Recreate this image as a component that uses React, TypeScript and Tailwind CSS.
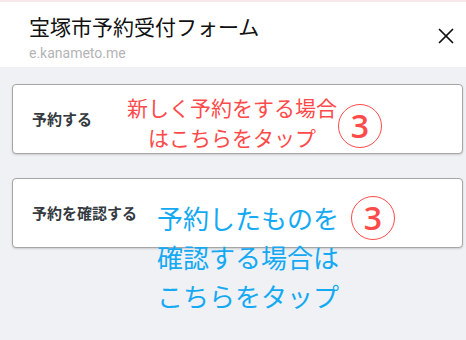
import { X } from 'lucide-react'

const jp = { fontFamily: '"Noto Sans CJK JP", "Noto Sans", sans-serif' }

type CircleProps = { className: string }

// circled step number laid over the button
const StepBadge = ({ className }: CircleProps) => (
  <span
    className={`absolute w-[44px] h-[44px] rounded-full border-[1.5px] border-[#ff4a4a] text-[#ff4a4a] flex items-center justify-center text-[32px] font-semibold leading-none ${className}`}
    style={{ fontFamily: '"Open Sans", "Liberation Sans", sans-serif' }}>
    3
  </span>
)

export default function App() {
  return (
    <div
      className="w-[466px] h-[340px] bg-[#f0f1f5] overflow-hidden"
      style={jp}>
      <div className="h-[2px] bg-[#f8e8ec]" />
      <header className="bg-white h-[65px] flex justify-between pl-[29px] pr-[6px] pt-[10px]">
        <div>
          <h1 className="text-[21px] leading-[28px] text-[#111111]">
            宝塚市予約受付フォーム
          </h1>
          <p
            className="text-[14px] leading-[18px] text-[#b4b4b4] mt-[4px]"
            style={{ fontFamily: 'Roboto, "Liberation Sans", sans-serif' }}>
            e.kanameto.me
          </p>
        </div>
        <button className="w-[28px] h-[28px] mt-[10px] flex items-center justify-center text-[#111111]">
          <X size={26} strokeWidth={1.6} />
        </button>
      </header>

      <main className="pl-[12px] pr-[3px] pt-[17px] flex flex-col gap-[24px]">
        <div className="relative h-[70px] bg-white border border-[#a6a6a6] rounded-[4px] shadow-[0_1px_2px_rgba(0,0,0,0.15)] flex items-center pl-[19px]">
          <span className="text-[15px] font-bold text-[#343a40]">予約する</span>
          <div className="absolute left-[112px] top-[7px] w-[214px] text-center text-[21px] leading-[30px] text-[#ff4a4a]">
            <div>新しく予約をする場合</div>
            <div>はこちらをタップ</div>
          </div>
          <StepBadge className="left-[325px] top-[19px]" />
        </div>

        <div className="relative h-[70px] bg-white border border-[#a6a6a6] rounded-[4px] shadow-[0_1px_2px_rgba(0,0,0,0.15)] flex items-center pl-[19px]">
          <span className="text-[15px] font-bold text-[#343a40]">予約を確認する</span>
          <div className="absolute left-[144px] top-[19px] text-[26px] leading-[39px] text-[#14a9f3] whitespace-nowrap">
            <div>予約したものを</div>
            <div>確認する場合は</div>
            <div>こちらをタップ</div>
          </div>
          <StepBadge className="left-[338px] top-[17px]" />
        </div>
      </main>
    </div>
  )
}
